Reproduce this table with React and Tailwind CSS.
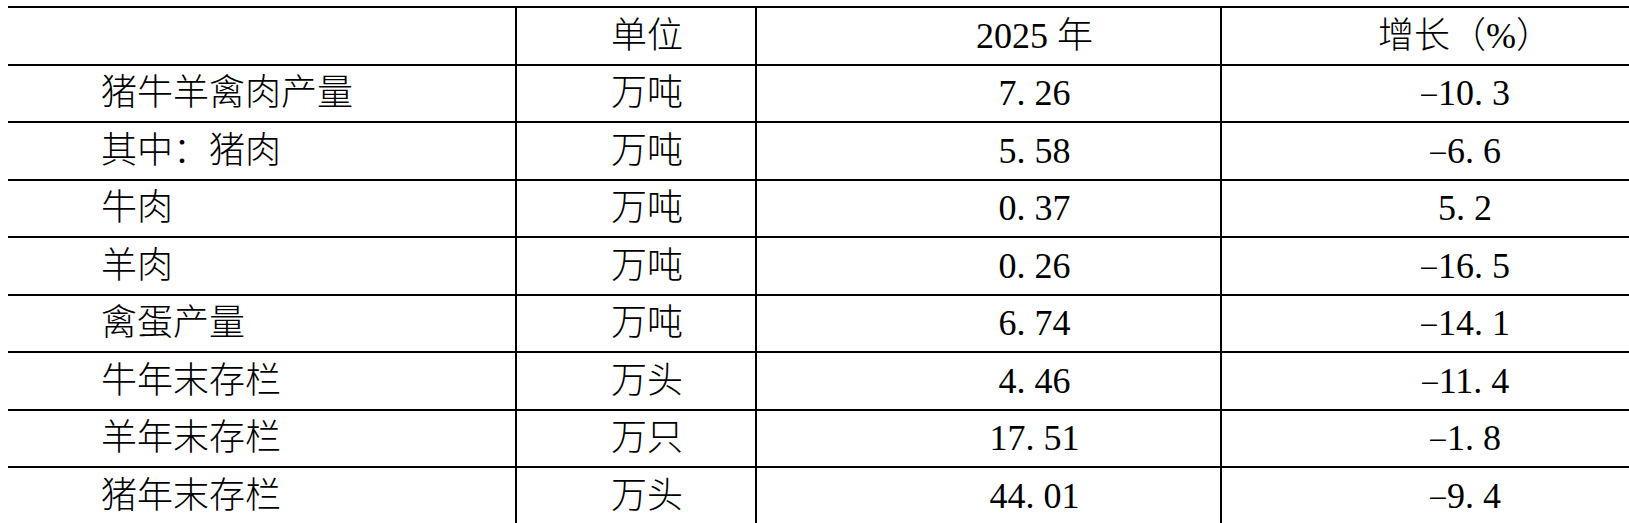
import React from "react";

const rows = [
  ["猪牛羊禽肉产量", "万吨", "7.26", "-10.3"],
  ["其中：猪肉", "万吨", "5.58", "-6.6"],
  ["牛肉", "万吨", "0.37", "5.2"],
  ["羊肉", "万吨", "0.26", "-16.5"],
  ["禽蛋产量", "万吨", "6.74", "-14.1"],
  ["牛年末存栏", "万头", "4.46", "-11.4"],
  ["羊年末存栏", "万只", "17.51", "-1.8"],
  ["猪年末存栏", "万头", "44.01", "-9.4"],
];

// SimSun-like half-width period and long thin dash
function Num({ value }) {
  return value.split("").map((ch, i) => {
    if (ch === ".")
      return (
        <span key={i} className="inline-block w-[0.5em] text-left">
          .
        </span>
      );
    if (ch === "-")
      return (
        <span key={i} className="inline-block w-[0.5em] text-center scale-x-[1.7] scale-y-[0.6]">
          -
        </span>
      );
    return ch;
  });
}

function Row({ cells, header }) {
  const [name, unit, value, growth] = cells;
  return (
    <div className="grid grid-cols-[507px_240px_465px_408px] h-[57.5px] border-t-2 border-black">
      <div className="flex items-center pl-[93px]">{name}</div>
      <div className="flex items-center justify-center border-l-2 border-black pl-[22px]">{unit}</div>
      <div className="flex items-center justify-center border-l-2 border-black pl-[92px]">
        {header ? value : <Num value={value} />}
      </div>
      <div className="flex items-center justify-center border-l-2 border-black pl-[80px]">
        {header ? growth : <Num value={growth} />}
      </div>
    </div>
  );
}

export default function App() {
  return (
    <div className="w-[1629px] h-[523px] overflow-hidden bg-white text-black">
      <div
        className="ml-[8px] mt-[6px] text-[36px] leading-none font-light"
        style={{ fontFamily: '"Liberation Serif", "Noto Sans CJK SC", serif' }}
      >
        <Row header cells={["", "单位", "2025 年", "增长（%）"]} />
        {rows.map((r) => (
          <Row key={r[0]} cells={r} />
        ))}
      </div>
    </div>
  );
}
